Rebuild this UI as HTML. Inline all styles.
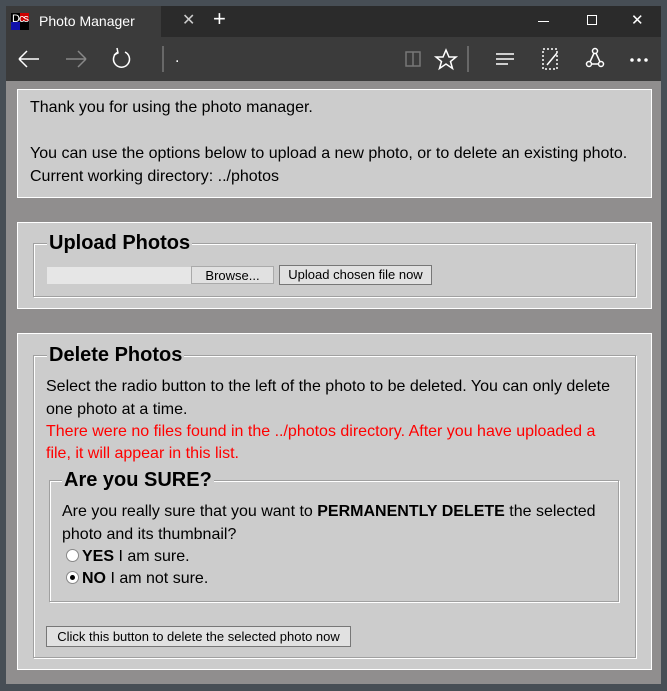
<!DOCTYPE html><html><head><style>
*{margin:0;padding:0;box-sizing:border-box}
body{width:667px;height:691px;background:#474e55;position:relative;overflow:hidden;font-family:"Liberation Sans",Arial,sans-serif;font-size:16px;color:#000}
.a{position:absolute}
.box{position:absolute;background:#cccccc;border:1px solid #fff}
.fs{position:absolute;border:1px solid #a0a0a0;box-shadow:1px 1px 0 #fff inset, 1px 1px 0 #fff}
.lg{position:absolute;background:#ccc;font-weight:bold;font-size:20px;padding:0 2px;line-height:22px}
.btn{position:absolute;background:#e1e1e1;border:1px solid #777;font-size:13px;text-align:center;line-height:18px;color:#000}
.t{position:absolute;white-space:nowrap;line-height:23px}
.w{color:#fff}
</style></head><body>
<div class="a" style="left:6px;top:6px;width:655px;height:31px;background:#2b2b2b"></div>
<div class="a" style="left:6px;top:6px;width:155px;height:31px;background:#3b3b3b"></div>
<div class="a" style="left:11px;top:13px;width:18px;height:17px;background:#000"><div style="position:absolute;right:0;top:0;width:9px;height:8px;background:#c00"></div><div style="position:absolute;left:0;bottom:0;width:9px;height:8px;background:#11a"></div><span style="position:absolute;left:1px;top:0;font-size:11px;color:#fff;letter-spacing:-1px">Dcs</span></div>
<div class="t w" style="left:39px;top:10px;font-size:14px">Photo Manager</div>
<div class="t w" style="left:182px;top:9px;font-size:16px;color:#ccc">✕</div>
<div class="t w" style="left:213px;top:7px;font-size:22px;font-weight:300">+</div>
<div class="a" style="left:538px;top:21px;width:11px;height:1px;background:#fff"></div>
<div class="a" style="left:587px;top:15px;width:10px;height:10px;border:1px solid #fff"></div>
<div class="t w" style="left:631px;top:9px;font-size:15px">✕</div>
<div class="a" style="left:6px;top:37px;width:655px;height:44px;background:#3b3b3b"></div>
<svg class="a" style="left:6px;top:37px" width="655" height="44" fill="none" stroke="#fff" stroke-width="1.5">
<path d="M13 22h20M13 22l8-8M13 22l8 8"/>
<path d="M60 22h20M80 22l-8-8M80 22l-8 8" stroke="#888"/>
<path d="M112 15a8 8 0 1 0 7 0"/><path d="M111 11l1 5-4 2"/>
<path d="M157 9v26" stroke="#777"/>
<path d="M400 15h7v14h-7zM407 15h7v14h-7z" stroke="#777"/>
<path d="M440 13l3 7 7 0-5.5 4.5 2 7-6.5-4.5-6.5 4.5 2-7-5.5-4.5 7 0z"/>
<path d="M462 9v26" stroke="#777"/>
<path d="M490 17h18M490 22h18M490 27h12"/>
<path d="M537 12h14v20h-14z" stroke-dasharray="2 2"/><path d="M541 28l10-12"/>
<path d="M589 14l-6 13h12z"/><circle cx="589" cy="14" r="2.5" fill="#3b3b3b"/><circle cx="583" cy="27" r="2.5" fill="#3b3b3b"/><circle cx="595" cy="27" r="2.5" fill="#3b3b3b"/>
<circle cx="626" cy="23" r="1" fill="#fff"/><circle cx="633" cy="23" r="1" fill="#fff"/><circle cx="640" cy="23" r="1" fill="#fff"/>
</svg>
<div class="t w" style="left:175px;top:46px">.</div>
<div class="a" style="left:6px;top:81px;width:655px;height:603px;background:#908e8e"></div>

<div class="box" style="left:17px;top:89px;width:635px;height:109px"></div>
<div class="t" style="left:30px;top:96px">Thank you for using the photo manager.</div>
<div class="t" style="left:30px;top:142px">You can use the options below to upload a new photo, or to delete an existing photo.</div>
<div class="t" style="left:30px;top:165px">Current working directory: ../photos</div>

<div class="box" style="left:17px;top:222px;width:635px;height:87px"></div>
<div class="fs" style="left:33px;top:243px;width:603px;height:54px"></div>
<div class="lg" style="left:47px;top:232px">Upload Photos</div>
<div class="a" style="left:47px;top:267px;width:144px;height:17px;background:#e6e6e6"></div>
<div class="btn" style="left:191px;top:266px;width:83px;height:18px;border-color:#aaa">Browse...</div>
<div class="btn" style="left:279px;top:265px;width:153px;height:20px">Upload chosen file now</div>

<div class="box" style="left:17px;top:333px;width:635px;height:337px"></div>
<div class="fs" style="left:33px;top:355px;width:603px;height:303px"></div>
<div class="lg" style="left:47px;top:344px">Delete Photos</div>
<div class="t" style="left:46px;top:375px">Select the radio button to the left of the photo to be deleted. You can only delete</div>
<div class="t" style="left:46px;top:398px">one photo at a time.</div>
<div class="t" style="left:46px;top:420px;color:#f00">There were no files found in the ../photos directory. After you have uploaded a</div>
<div class="t" style="left:46px;top:442px;color:#f00">file, it will appear in this list.</div>
<div class="fs" style="left:49px;top:480px;width:570px;height:122px"></div>
<div class="lg" style="left:62px;top:469px">Are you SURE?</div>
<div class="t" style="left:62px;top:500px">Are you really sure that you want to <b>PERMANENTLY DELETE</b> the selected</div>
<div class="t" style="left:62px;top:523px">photo and its thumbnail?</div>
<div class="a" style="left:66px;top:549px;width:13px;height:13px;border-radius:50%;background:#fff;border:1px solid #888"></div>
<div class="t" style="left:82px;top:545px"><b>YES</b> I am sure.</div>
<div class="a" style="left:66px;top:571px;width:13px;height:13px;border-radius:50%;background:#fff;border:1px solid #888"><div style="position:absolute;left:3px;top:3px;width:5px;height:5px;border-radius:50%;background:#000"></div></div>
<div class="t" style="left:82px;top:567px"><b>NO</b> I am not sure.</div>
<div class="btn" style="left:46px;top:626px;width:305px;height:21px;line-height:19px">Click this button to delete the selected photo now</div>
</body></html>
